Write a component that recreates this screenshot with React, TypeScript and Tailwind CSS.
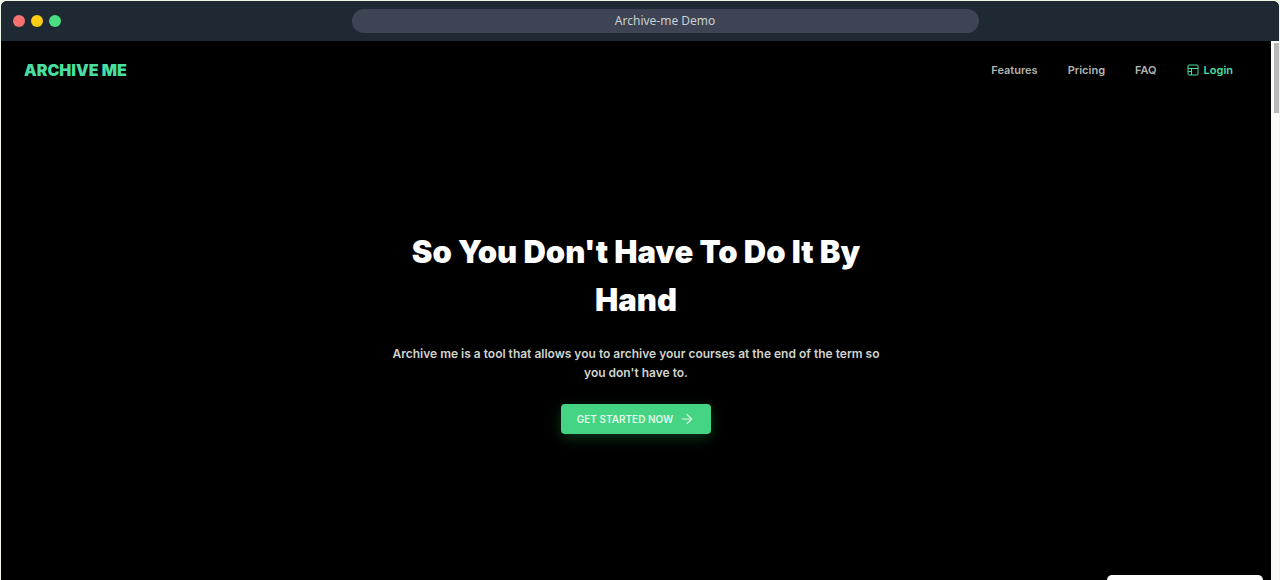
import { ArrowRight } from "lucide-react";

const links = ["Features", "Pricing", "FAQ"];

function LayoutIcon() {
  return (
    <svg
      width="12"
      height="12"
      viewBox="0 0 12 12"
      fill="none"
      stroke="currentColor"
      strokeWidth="1"
      aria-hidden="true"
    >
      <rect x="1" y="1" width="10" height="10" rx="1" />
      <path d="M1 4.5h10M4.5 4.5V11M4.5 7.5H1" />
    </svg>
  );
}

function WindowBar() {
  return (
    <header className="flex h-10 items-center justify-between bg-[#1f2933] px-3">
      <div className="flex flex-1 gap-1.5">
        <span className="size-3 rounded-full bg-[#f87171]" />
        <span className="size-3 rounded-full bg-[#facc15]" />
        <span className="size-3 rounded-full bg-[#4ade80]" />
      </div>
      <div className="mr-[23%] flex h-6 w-1/2 items-center justify-center rounded-full bg-[#3f4455] font-['Noto_Sans',sans-serif] text-xs text-[#c8d0d0]">
        Archive-me Demo
      </div>
    </header>
  );
}

export default function App() {
  return (
    <div className="h-screen overflow-hidden bg-[#f0f6e8] px-px pt-px font-['Inter',sans-serif]">
      <div className="flex h-full flex-col overflow-hidden rounded-t-md bg-black">
        <WindowBar />
        <div className="flex min-h-0 flex-1">
          <div className="relative flex flex-1 flex-col">
            <nav className="flex items-center justify-between pt-[19px] pr-[38px] pl-[23px]">
              <a href="#home" className="text-base leading-5 font-black text-[#48dfa0]">
                ARCHIVE ME
              </a>
              <div className="flex items-center gap-[30px] text-[11px] leading-4 font-semibold text-[#b4b4b0]">
                {links.map((label) => (
                  <a key={label} href={`#${label.toLowerCase()}`}>
                    {label}
                  </a>
                ))}
                <a href="#login" className="flex items-center gap-[5px] text-[#48dfa0]">
                  <LayoutIcon />
                  Login
                </a>
              </div>
            </nav>
            <main className="mx-auto mt-37 flex w-full max-w-[500px] flex-col items-center text-center">
              <h1 className="text-[31px] leading-12 font-black text-white">
                So You Don&apos;t Have To Do It By Hand
              </h1>
              <p className="mt-5 text-xs leading-[19px] font-semibold text-[#d0d4cc]">
                Archive me is a tool that allows you to archive your courses at the end of the term
                so you don&apos;t have to.
              </p>
              <button
                type="button"
                className="mt-[22px] flex h-[30px] items-center gap-1.5 rounded-sm bg-[#45d483] px-4 text-[10px] font-semibold text-[#e0fae8] shadow-[0_4px_14px_rgba(20,90,45,0.6)]"
              >
                GET STARTED NOW
                <ArrowRight size={16} strokeWidth={1.75} />
              </button>
            </main>
            <div className="absolute right-2 bottom-0 h-[5px] w-[156px] rounded-t-md bg-white" />
          </div>
          <div className="w-2 bg-[#fafaf6] pt-0.5 pl-[3px]">
            <div className="h-[70px] bg-[#b8b8b8]" />
          </div>
        </div>
      </div>
    </div>
  );
}
